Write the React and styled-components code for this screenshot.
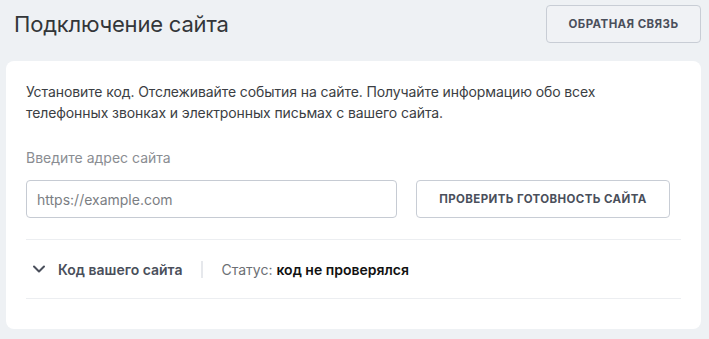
import React from "react";
import styled, { createGlobalStyle } from "styled-components";

const Global = createGlobalStyle`
  html, body { margin: 0; padding: 0; background: #eef1f4; }
  body { font-family: Inter, "Noto Sans", sans-serif; -webkit-font-smoothing: antialiased; }
  * { box-sizing: border-box; }
`;

const Page = styled.div`
  padding: 5px 8px 10px 6px;
`;

const Header = styled.header`
  display: flex;
  align-items: center;
  justify-content: space-between;
  padding-left: 8px;
  height: 38px;
`;

const Title = styled.h1`
  margin: 0;
  font-size: 22px;
  font-weight: 400;
  color: #333639;
  letter-spacing: -0.2px;
`;

const GhostButton = styled.button`
  height: 38px;
  padding: 0 ${(p) => p.$px || 20}px;
  border: 1px solid #c8cdd5;
  border-radius: 4px;
  background: ${(p) => p.$bg || "#f0f2f5"};
  color: #4a4f5b;
  font-family: Inter, "Noto Sans", sans-serif;
  font-size: 11.5px;
  font-weight: 700;
  letter-spacing: 0.4px;
  text-transform: uppercase;
  cursor: pointer;
  width: ${(p) => (p.$w ? p.$w + "px" : "auto")};
`;

const Card = styled.section`
  margin-top: 18px;
  background: #fff;
  border-radius: 8px;
  padding: 20px 20px 30px;
`;

const Intro = styled.p`
  margin: 0;
  font-size: 14px;
  line-height: 21px;
  color: #3b3e43;
  letter-spacing: -0.1px;
  max-width: 590px;
`;

const Label = styled.label`
  display: block;
  margin-top: 24px;
  font-size: 14px;
  line-height: 21px;
  color: #8a8d92;
`;

const FormRow = styled.div`
  display: flex;
  gap: 19px;
  margin-top: 12px;
`;

const Input = styled.input`
  width: 371px;
  height: 38px;
  border: 1px solid #c6cbd3;
  border-radius: 4px;
  padding: 0 10px;
  font-family: Inter, "Noto Sans", sans-serif;
  font-size: 14px;
  color: #333;
  &::placeholder { color: #7b7e83; }
`;

const Divider = styled.hr`
  margin: 0;
  border: 0;
  border-top: 1px solid #eceef1;
`;

const Accordion = styled.div`
  margin-top: 21px;
`;

const AccordionRow = styled.div`
  display: flex;
  align-items: center;
  height: 58px;
  padding-left: 6px;
`;

const Chevron = styled.svg`
  width: 14px;
  height: 14px;
  margin-right: 12px;
`;

const SectionName = styled.span`
  font-size: 14px;
  font-weight: 600;
  color: #4a4f5b;
`;

const VSep = styled.span`
  width: 2px;
  height: 17px;
  background: #e6e8ec;
  margin: 0 18px 0 19px;
`;

const StatusLabel = styled.span`
  font-size: 14px;
  color: #6c6f74;
  margin-right: 4px;
`;

const StatusValue = styled.span`
  font-size: 14px;
  font-weight: 600;
  color: #111;
`;

export default function App() {
  return (
    <Page>
      <Global />
      <Header>
        <Title>Подключение сайта</Title>
        <GhostButton $w={155}>Обратная связь</GhostButton>
      </Header>
      <Card>
        <Intro>
          Установите код. Отслеживайте события на сайте. Получайте информацию обо всех
          телефонных звонках и электронных письмах с вашего сайта.
        </Intro>
        <Label htmlFor="site">Введите адрес сайта</Label>
        <FormRow>
          <Input id="site" placeholder="https://example.com" />
          <GhostButton $bg="#fff" $w={254}>Проверить готовность сайта</GhostButton>
        </FormRow>
        <Accordion>
          <Divider />
          <AccordionRow>
            <Chevron viewBox="0 0 14 14" fill="none">
              <path d="M2 4.5 L7 9.5 L12 4.5" stroke="#4a4f5b" strokeWidth="2" strokeLinecap="round" strokeLinejoin="round" />
            </Chevron>
            <SectionName>Код вашего сайта</SectionName>
            <VSep />
            <StatusLabel>Статус:</StatusLabel>
            <StatusValue>код не проверялся</StatusValue>
          </AccordionRow>
          <Divider />
        </Accordion>
      </Card>
    </Page>
  );
}
